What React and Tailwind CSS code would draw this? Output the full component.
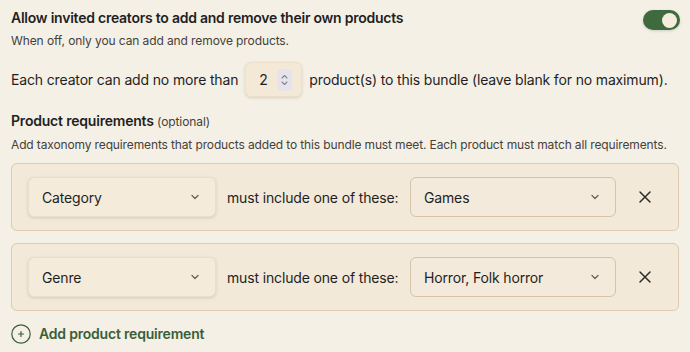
import React from "react";

function Chevron() {
  return (
    <svg width="12" height="12" viewBox="0 0 12 12" fill="none">
      <path d="M3 4.5L6 7.5L9 4.5" stroke="#6b6358" strokeWidth="1.3" strokeLinecap="round" strokeLinejoin="round" />
    </svg>
  );
}

function CloseIcon() {
  return (
    <svg width="14" height="14" viewBox="0 0 14 14" fill="none">
      <path d="M2 2L12 12M12 2L2 12" stroke="#2b2b2b" strokeWidth="1.5" strokeLinecap="round" />
    </svg>
  );
}

function Select({ value, width, raised }) {
  return (
    <div
      className={
        "flex h-10 shrink-0 items-center justify-between rounded-md pl-[13px] pr-[14px] text-[14px] tracking-[-0.15px] text-[#1f1f1f] " +
        width +
        (raised
          ? " border border-[#ecdfc9] bg-[#f5ebdb] shadow-[0_1px_3px_rgba(120,95,60,0.22)]"
          : " border border-[#d5c4a6] bg-[#f4eadb]")
      }
    >
      <span>{value}</span>
      <Chevron />
    </div>
  );
}

function Requirement({ field, value }) {
  return (
    <div className="flex items-center rounded-md border border-[#dccbb0] bg-[#f3e9d8] py-[13px] pl-4 pr-[26px]">
      <Select value={field} width="w-[188px]" raised />
      <span className="ml-[11px] whitespace-nowrap text-[14px] tracking-[-0.15px] text-[#1f1f1f]">must include one of these:</span>
      <div className="ml-auto flex items-center gap-[22px]">
        <Select value={value} width="w-[206px]" />
        <CloseIcon />
      </div>
    </div>
  );
}

export default function App() {
  return (
    <div className="min-h-[352px] w-[690px] bg-[#f4f0e6] px-[11px] pt-2 font-['Inter',sans-serif] text-[#1f1f1f]">
      <div className="flex items-start justify-between">
        <div>
          <h2 className="whitespace-nowrap text-[14px] font-semibold leading-5 tracking-[-0.24px]">Allow invited creators to add and remove their own products</h2>
          <p className="mt-1 whitespace-nowrap text-[12px] leading-[18px] tracking-[-0.1px] text-[#45413b]">When off, only you can add and remove products.</p>
        </div>
        <div className="mr-[-1px] mt-[2px] flex h-5 w-[37px] items-center justify-end rounded-full bg-[#3f6a3e] pr-[3px] shadow-[0_1px_3px_rgba(0,0,0,0.15)]">
          <div className="h-[15px] w-[15px] rounded-full bg-[#f6ecdc]" />
        </div>
      </div>

      <div className="mt-3 flex items-center whitespace-nowrap text-[14px] tracking-[-0.15px]">
        <span>Each creator can add no more than</span>
        <div className="ml-[7px] flex h-[35px] w-[57px] items-center rounded-md border border-[#ece0cb] bg-[#f4e9d7] pl-[13px] shadow-[0_1px_3px_rgba(120,95,60,0.22)]">
          <span className="w-[18px]">2</span>
          <div className="flex h-[22px] w-[15px] flex-col items-center justify-center rounded-sm bg-[#e7e3ec]">
            <svg width="9" height="14" viewBox="0 0 9 14" fill="none">
              <path d="M2 5L4.5 2.5L7 5M2 9L4.5 11.5L7 9" stroke="#8a8698" strokeWidth="1.1" strokeLinecap="round" strokeLinejoin="round" />
            </svg>
          </div>
        </div>
        <span className="ml-[7px]">product(s) to this bundle (leave blank for no maximum).</span>
      </div>

      <div className="mt-[14px]">
        <h3 className="whitespace-nowrap text-[14px] font-semibold leading-5 tracking-[-0.2px]">
          Product requirements <span className="text-[12px] font-normal tracking-[-0.1px] text-[#45413b]">(optional)</span>
        </h3>
        <p className="mt-1 whitespace-nowrap text-[12px] leading-[18px] tracking-[-0.13px] text-[#45413b]">
          Add taxonomy requirements that products added to this bundle must meet. Each product must match all requirements.
        </p>
      </div>

      <div className="mt-[9px] flex flex-col gap-3">
        <Requirement field="Category" value="Games" />
        <Requirement field="Genre" value="Horror, Folk horror" />
      </div>

      <button className="mt-3 flex items-center gap-2 whitespace-nowrap text-[14px] font-semibold tracking-[-0.2px] text-[#3b5e36]">
        <svg width="20" height="20" viewBox="0 0 20 20" fill="none">
          <circle cx="10" cy="10" r="9.2" stroke="#3b5e36" strokeWidth="1.2" />
          <path d="M10 7.5V12.5M7.5 10H12.5" stroke="#3b5e36" strokeWidth="1.2" strokeLinecap="round" />
        </svg>
        Add product requirement
      </button>
    </div>
  );
}
